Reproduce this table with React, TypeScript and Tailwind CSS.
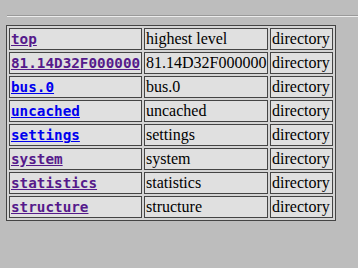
import React from 'react';

const rows = [
  { name: 'top', desc: 'highest level', visited: true },
  { name: '81.14D32F000000', desc: '81.14D32F000000', visited: true },
  { name: 'bus.0', desc: 'bus.0', visited: false },
  { name: 'uncached', desc: 'uncached', visited: false },
  { name: 'settings', desc: 'settings', visited: false },
  { name: 'system', desc: 'system', visited: true },
  { name: 'statistics', desc: 'statistics', visited: true },
  { name: 'structure', desc: 'structure', visited: true },
];

export default function App() {
  return (
    <div className="min-h-screen w-[358px] h-[268px] bg-[#bdbdbd] overflow-hidden pt-[15px] font-['Liberation_Serif',serif] text-[16px] text-black">
      {/* separator */}
      <div className="ml-[7px] h-[2px] border-t border-t-[#9a9a9a] border-b border-b-[#ececec]" />

      <table className="mt-[8px] ml-[6px] border border-[#444] bg-[#d4d4d4] border-separate border-spacing-[2px]">
        <tbody>
          {rows.map((r) => (
            <tr key={r.name}>
              <td className="w-[133px] h-[22px] p-0 pl-[1px] border border-[#444] bg-[#e0e0e0] leading-[18px] align-middle">
                <a
                  href="#"
                  className={`font-['DejaVu_Sans_Mono',monospace] font-bold text-[14.3px] underline ${
                    r.visited ? 'text-[#551a8b]' : 'text-[#0000ee]'
                  }`}
                >
                  {r.name}
                </a>
              </td>
              <td className="w-[124px] h-[22px] p-0 pl-[1px] border border-[#444] bg-[#e0e0e0] leading-[18px] align-middle whitespace-nowrap">
                {r.desc}
              </td>
              <td className="w-[63px] h-[22px] p-0 pl-[1px] border border-[#444] bg-[#e0e0e0] leading-[18px] align-middle">
                directory
              </td>
            </tr>
          ))}
        </tbody>
      </table>
    </div>
  );
}
